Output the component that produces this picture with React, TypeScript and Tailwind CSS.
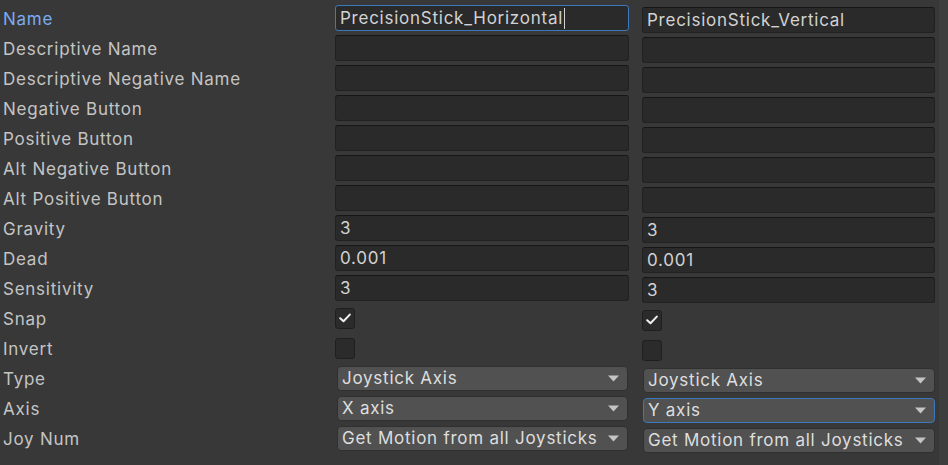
import React from 'react'

type Field =
  | { kind: 'text'; value: string; focused?: boolean; caret?: boolean }
  | { kind: 'check'; checked: boolean }
  | { kind: 'select'; value: string; focused?: boolean }

const labels = [
  'Name',
  'Descriptive Name',
  'Descriptive Negative Name',
  'Negative Button',
  'Positive Button',
  'Alt Negative Button',
  'Alt Positive Button',
  'Gravity',
  'Dead',
  'Sensitivity',
  'Snap',
  'Invert',
  'Type',
  'Axis',
  'Joy Num',
]

const horizontal: Field[] = [
  { kind: 'text', value: 'PrecisionStick_Horizontal', focused: true, caret: true },
  { kind: 'text', value: '' },
  { kind: 'text', value: '' },
  { kind: 'text', value: '' },
  { kind: 'text', value: '' },
  { kind: 'text', value: '' },
  { kind: 'text', value: '' },
  { kind: 'text', value: '3' },
  { kind: 'text', value: '0.001' },
  { kind: 'text', value: '3' },
  { kind: 'check', checked: true },
  { kind: 'check', checked: false },
  { kind: 'select', value: 'Joystick Axis' },
  { kind: 'select', value: 'X axis' },
  { kind: 'select', value: 'Get Motion from all Joysticks' },
]

const vertical: Field[] = [
  { kind: 'text', value: 'PrecisionStick_Vertical' },
  { kind: 'text', value: '' },
  { kind: 'text', value: '' },
  { kind: 'text', value: '' },
  { kind: 'text', value: '' },
  { kind: 'text', value: '' },
  { kind: 'text', value: '' },
  { kind: 'text', value: '3' },
  { kind: 'text', value: '0.001' },
  { kind: 'text', value: '3' },
  { kind: 'check', checked: true },
  { kind: 'check', checked: false },
  { kind: 'select', value: 'Joystick Axis' },
  { kind: 'select', value: 'Y axis', focused: true },
  { kind: 'select', value: 'Get Motion from all Joysticks' },
]

function Arrow() {
  return (
    <svg width="11" height="7" viewBox="0 0 11 7" className="shrink-0">
      <path d="M0 0.5 L11 0.5 L5.5 6.5 Z" fill="#c4c4c4" />
    </svg>
  )
}

function Check() {
  return (
    <svg width="12" height="10" viewBox="0 0 12 10">
      <path d="M1.2 5.2 L4.5 8.3 L10.8 1.6" stroke="#f0f0f0" strokeWidth="2" fill="none" strokeLinecap="round" strokeLinejoin="round" />
    </svg>
  )
}

function Cell({ f, inset }: { f: Field; inset: string }) {
  if (f.kind === 'check') {
    return (
      <div className="w-[20px] h-[21px] rounded-[3px] bg-[#2b2b2b] border border-[#1f1f1f] flex items-center justify-center">
        {f.checked && <Check />}
      </div>
    )
  }
  if (f.kind === 'select') {
    return (
      <div
        className={`${inset} flex-1 h-[25px] rounded-[4px] bg-[#515151] border flex items-center pl-[4px] pr-[8px] pt-[1px] text-[#dedede] ${
          f.focused ? 'border-[#3a79bb]' : 'border-[#303030]'
        }`}
      >
        <span className="flex-1 whitespace-nowrap">{f.value}</span>
        <Arrow />
      </div>
    )
  }
  return (
    <div
      className={`flex-1 h-[26px] rounded-[3px] bg-[#2a2a2a] border flex items-center pl-[4px] pt-[1px] text-[#d2d2d2] ${
        f.focused ? 'border-[#3a79bb]' : 'border-[#212121] border-t-[#161616]'
      }`}
    >
      <span className="whitespace-nowrap">{f.value}</span>
      {f.caret && <span className="w-px h-[21px] bg-[#d2d2d2] ml-[1px]" />}
    </div>
  )
}

function Column({ fields, className, inset }: { fields: Field[]; className: string; inset: string }) {
  return (
    <div className={`flex flex-col ${className}`}>
      {fields.map((f, i) => (
        <div key={i} className="h-[30px] flex items-center">
          <Cell f={f} inset={inset} />
        </div>
      ))}
    </div>
  )
}

export default function App() {
  return (
    <div className="w-[948px] h-[465px] bg-[#383838] flex overflow-hidden font-['Inter',sans-serif] text-[17px] tracking-[0.75px] leading-none">
      <div className="w-[335px] pt-[3px] pl-[3px] flex flex-col">
        {labels.map((l, i) => (
          <div key={l} className={`h-[30px] pt-[2px] flex items-center whitespace-nowrap ${i === 0 ? 'text-[#7babf0]' : 'text-[#c4c4c4]'}`}>
            {l}
          </div>
        ))}
      </div>
      <Column fields={horizontal} className="w-[294px] pt-[3px]" inset="ml-[2px] mr-[1px]" />
      <div className="w-[13px]" />
      <Column fields={vertical} className="w-[293px] pt-[5px]" inset="ml-[1px]" />
      <div className="w-[4px]" />
      <div className="flex-1 bg-[#3e3e3e]" />
    </div>
  )
}
